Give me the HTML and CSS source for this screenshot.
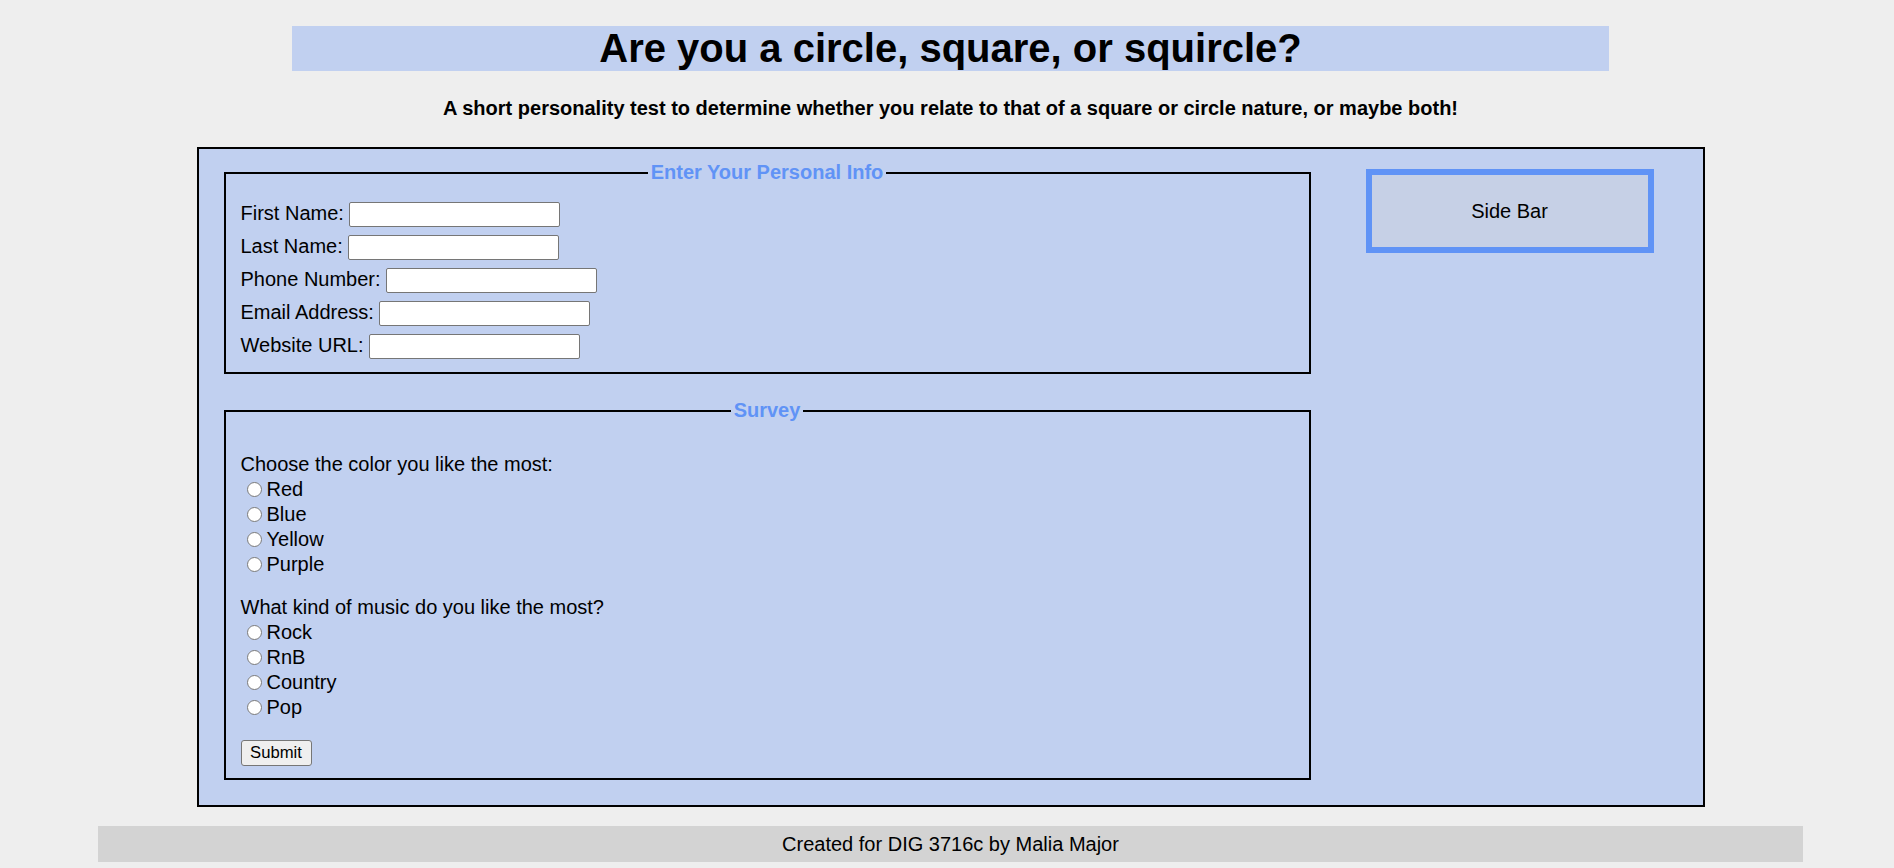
FILE: index.html
```html
<!DOCTYPE html>
<html lang="en">
<head>
<meta charset="utf-8">
<title>Are you a circle, square, or squircle?</title>
<link rel="stylesheet" href="styles.css">
</head>
<body>
<div class="page">
  <h1 class="title">Are you a circle, square, or squircle?</h1>
  <p class="subtitle">A short personality test to determine whether you relate to that of a square or circle nature, or maybe both!</p>
  <main class="main-box">
    <div class="forms">
      <fieldset class="set info">
        <legend class="legend">Enter Your Personal Info</legend>
        <div class="fields">
          <div class="field"><label class="field-label" for="fn">First Name:</label><input class="text-input" id="fn" type="text"></div>
          <div class="field"><label class="field-label" for="ln">Last Name:</label><input class="text-input" id="ln" type="text"></div>
          <div class="field"><label class="field-label" for="ph">Phone Number:</label><input class="text-input" id="ph" type="text"></div>
          <div class="field"><label class="field-label" for="em">Email Address:</label><input class="text-input" id="em" type="text"></div>
          <div class="field"><label class="field-label" for="url">Website URL:</label><input class="text-input" id="url" type="text"></div>
        </div>
      </fieldset>
      <fieldset class="set survey">
        <legend class="legend">Survey</legend>
        <div class="question first">
          <div class="q-text">Choose the color you like the most:</div>
          <label class="option"><input class="radio" type="radio" name="color"><span>Red</span></label>
          <label class="option"><input class="radio" type="radio" name="color"><span>Blue</span></label>
          <label class="option"><input class="radio" type="radio" name="color"><span>Yellow</span></label>
          <label class="option"><input class="radio" type="radio" name="color"><span>Purple</span></label>
        </div>
        <div class="question second">
          <div class="q-text">What kind of music do you like the most?</div>
          <label class="option"><input class="radio" type="radio" name="music"><span>Rock</span></label>
          <label class="option"><input class="radio" type="radio" name="music"><span>RnB</span></label>
          <label class="option"><input class="radio" type="radio" name="music"><span>Country</span></label>
          <label class="option"><input class="radio" type="radio" name="music"><span>Pop</span></label>
        </div>
        <button class="submit" type="submit">Submit</button>
      </fieldset>
    </div>
    <aside class="sidebar">Side Bar</aside>
  </main>
  <footer class="footer">Created for DIG 3716c by Malia Major</footer>
</div>
</body>
</html>
```
FILE: styles.css
```css
html, body {
  margin: 0;
  padding: 0;
}
body {
  background: #eeeeee;
  font-family: "Liberation Sans", Arial, sans-serif;
  font-size: 20px;
  color: #000;
}
.page {
  margin-left: 7px;
  display: flex;
  flex-direction: column;
  align-items: center;
  padding-bottom: 6px;
}
.title {
  margin: 26px 0 0;
  width: 1317px;
  height: 45px;
  line-height: 45px;
  background: #c1d0f0;
  text-align: center;
  font-size: 40px;
  font-weight: bold;
}
.subtitle {
  margin: 26px 0 0;
  line-height: 23px;
  font-weight: bold;
  text-align: center;
}
.main-box {
  box-sizing: border-box;
  margin-top: 27px;
  width: 1508px;
  border: 2px solid #000;
  background: #c1d0f0;
  padding: 12px 0 25px 25px;
  display: flex;
  align-items: flex-start;
}
.forms {
  width: 1087px;
  display: flex;
  flex-direction: column;
  gap: 25px;
}
.set {
  margin: 0;
  border: 2px solid #000;
  padding: 7px 15px 13px;
  min-width: 0;
}
.set.survey {
  padding-bottom: 12px;
}
.legend {
  margin: 0 auto;
  padding: 0 2.5px;
  color: #6093f6;
  font-weight: bold;
  line-height: 23px;
}
.fields {
  margin-top: 11px;
  display: flex;
  flex-direction: column;
  gap: 8px;
}
.field {
  display: flex;
  align-items: flex-start;
  height: 25px;
}
.field-label {
  line-height: 23px;
  margin-right: 5px;
}
.text-input {
  box-sizing: border-box;
  width: 211px;
  height: 25px;
  margin: 0;
  border: 1px solid #767676;
  border-radius: 2px;
  background: #fff;
  padding: 1px 2px;
}
.question {
  display: flex;
  flex-direction: column;
}
.question.first {
  margin-top: 23px;
}
.question.second {
  margin-top: 18px;
}
.q-text {
  line-height: 25px;
}
.option {
  display: flex;
  align-items: flex-start;
  height: 25px;
  line-height: 25px;
}
.radio {
  appearance: none;
  -webkit-appearance: none;
  box-sizing: border-box;
  width: 15px;
  height: 15px;
  margin: 5px 5px 0 6px;
  border: 1px solid #7a7a7a;
  border-radius: 50%;
  background: #fff;
}
.submit {
  margin-top: 20px;
  align-self: flex-start;
  box-sizing: border-box;
  width: 71px;
  height: 26px;
  padding: 0;
  border: 1px solid #767676;
  border-radius: 3px;
  background: #efefef;
  font-family: "Liberation Sans", Arial, sans-serif;
  font-size: 16.67px;
  color: #000;
}
.sidebar {
  box-sizing: border-box;
  margin: 8px 0 0 55px;
  width: 288px;
  height: 84px;
  border: 6px solid #6093f6;
  background: #c6d0e6;
  display: flex;
  align-items: center;
  justify-content: center;
}
.footer {
  margin-top: 19px;
  width: 1705px;
  height: 36px;
  line-height: 36px;
  background: #d3d3d3;
  text-align: center;
}
```
